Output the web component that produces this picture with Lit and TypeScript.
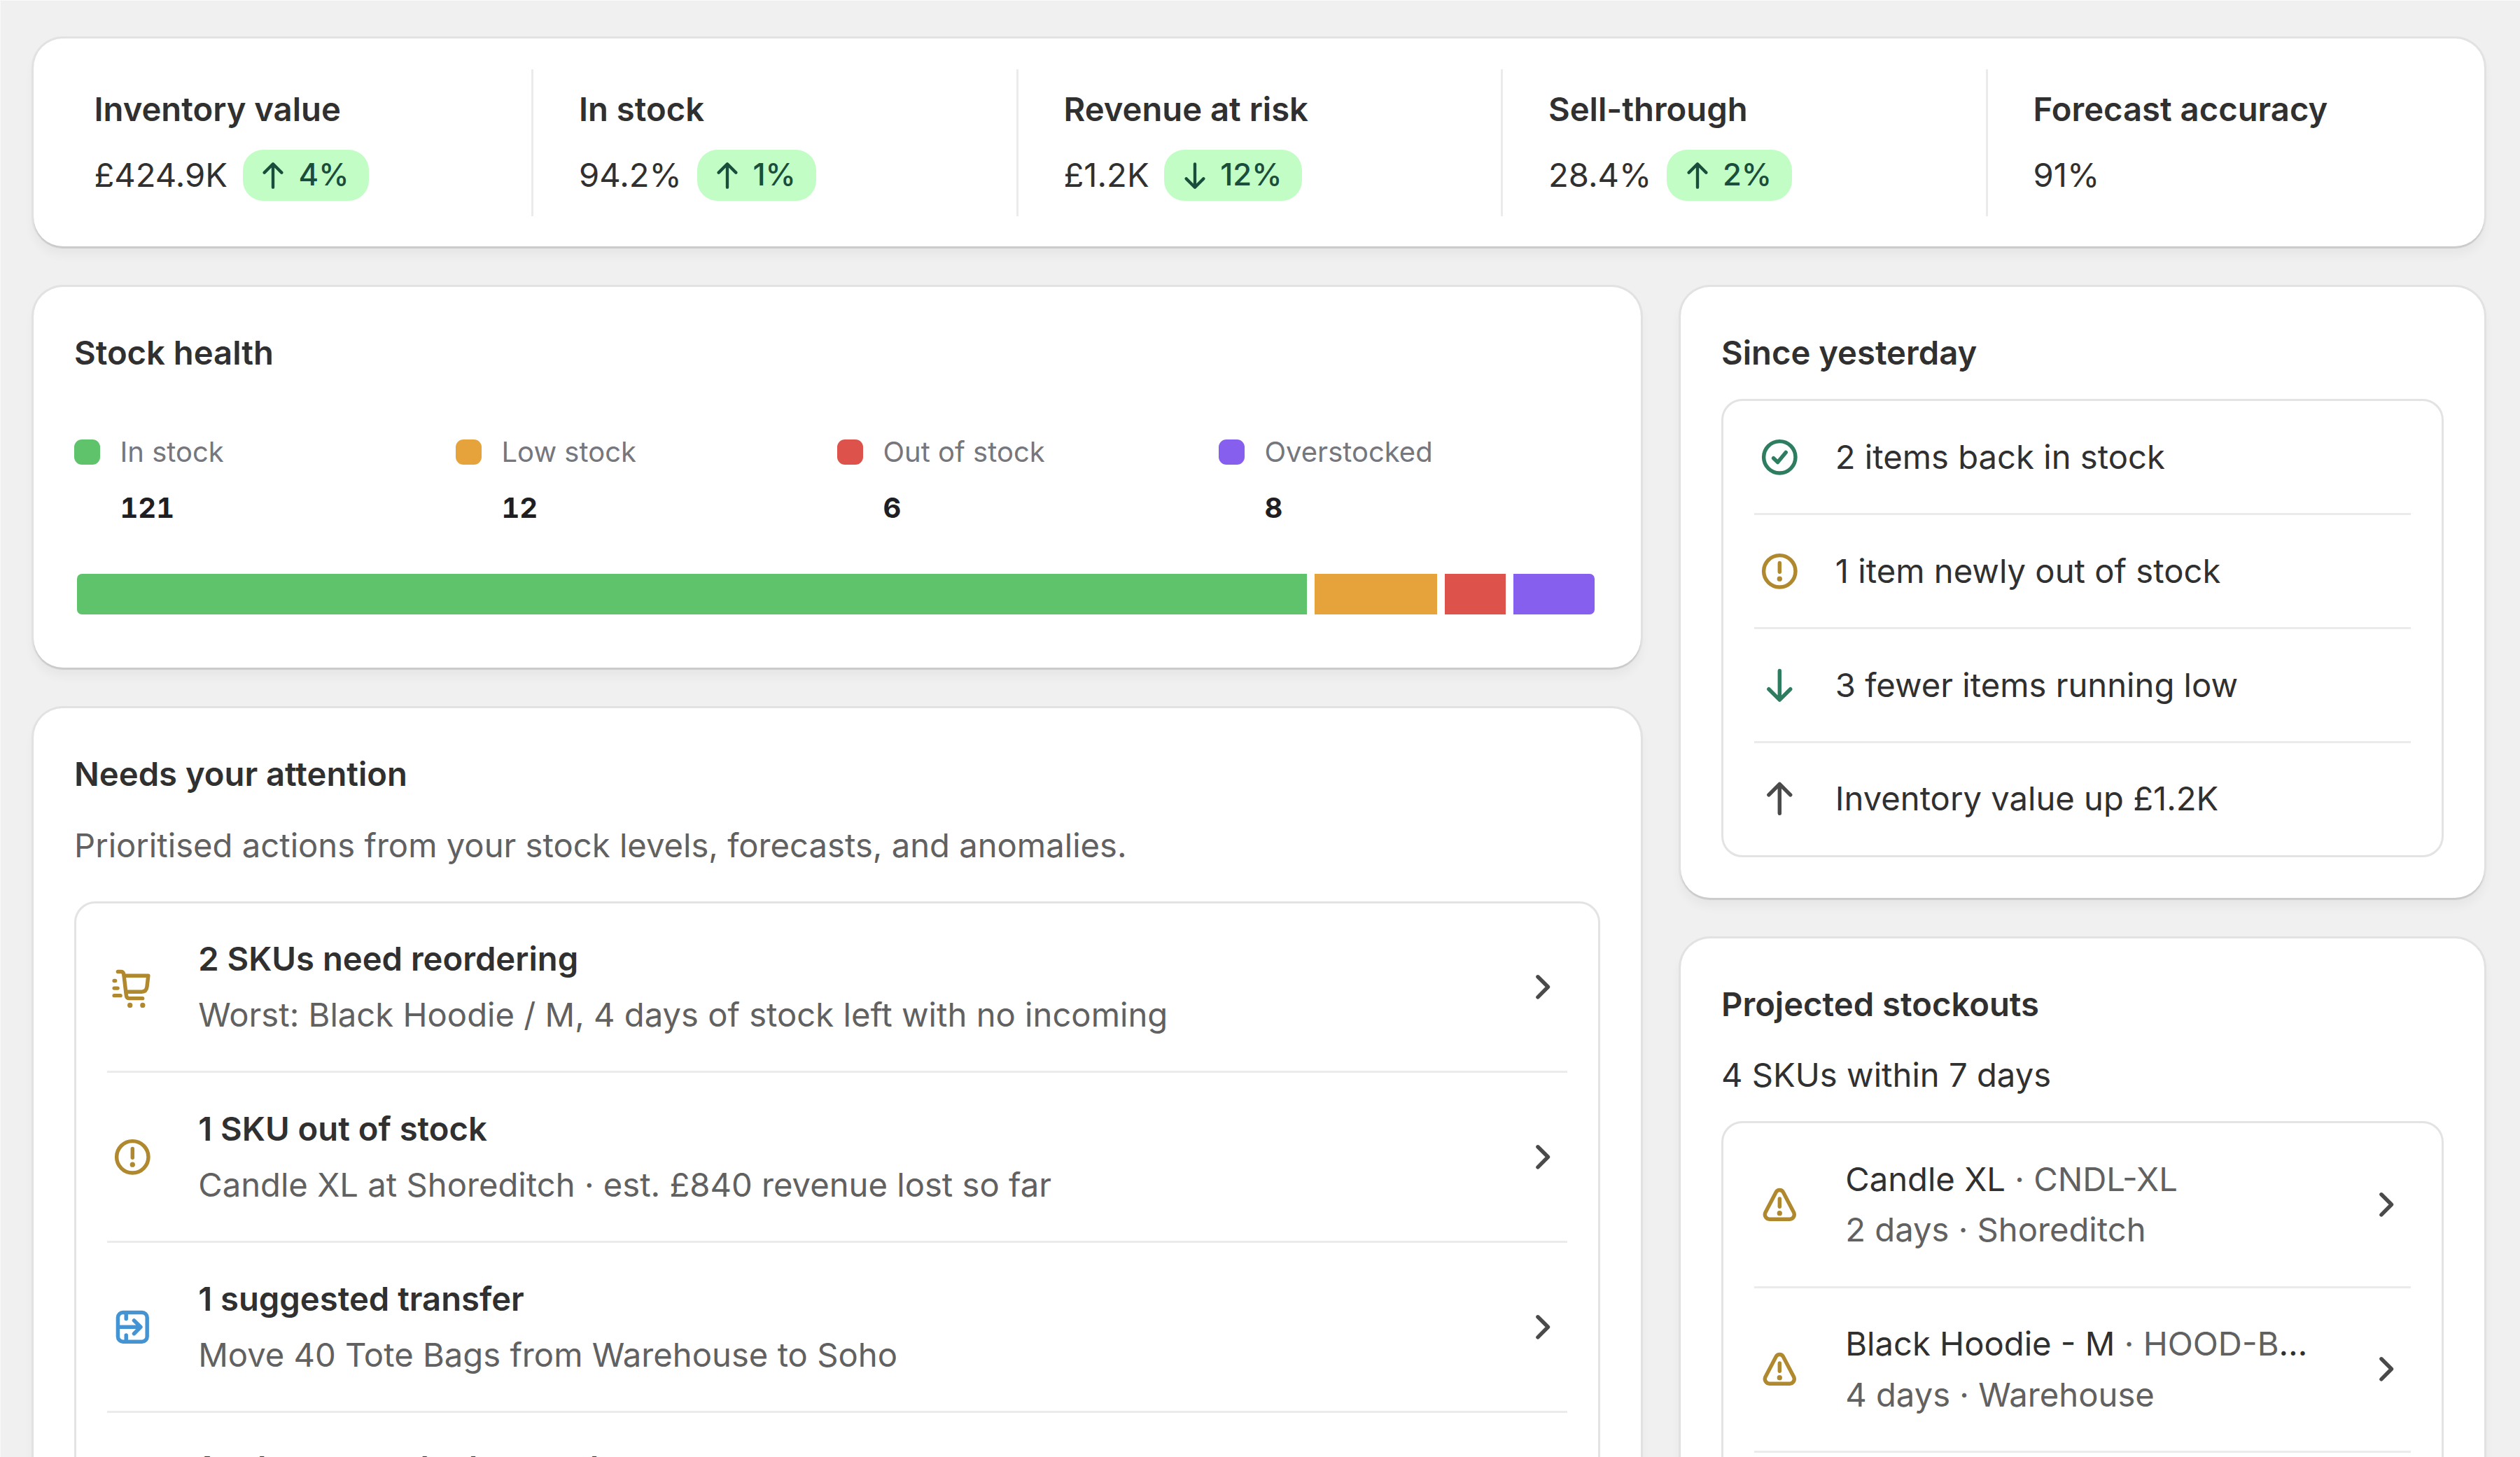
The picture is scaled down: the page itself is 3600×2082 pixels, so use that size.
import {LitElement, html, svg, css, nothing} from "lit";
import {customElement, property} from "lit/decorators.js";

// 20x20 icon grid, 1.5 strokes
const icons = {
  up: svg`<path d="M10 15.75V4.5M5.75 8.5 10 4.25 14.25 8.5" />`,
  down: svg`<path d="M10 4.25V15.5M5.75 11.5 10 15.75 14.25 11.5" />`,
  check: svg`<circle cx="10" cy="10" r="6.25" /><path d="m7.6 10.4 1.65 1.6 3.2-3.9" />`,
  alert: svg`<circle cx="10" cy="10" r="6.25" /><path d="M10 6.75v3.5" />
    <circle class="dot" cx="10" cy="13" r="1" />`,
  warning: svg`<path d="M8.6 5.1c.6-1.1 2.2-1.1 2.8 0l4.15 7.9c.65 1.25-.2 2.75-1.6 2.75h-7.9c-1.4 0-2.25-1.5-1.6-2.75z" />
    <path d="M10 7.7v3.1" /><circle class="dot" cx="10" cy="13.4" r="1" />`,
  transfer: svg`<rect x="4.25" y="4.25" width="11.5" height="11.5" rx="2" />
    <path d="M7.5 4.5v2.25M7.5 15.5v-2.25M4.5 10h8.5M10.6 7.4 13.2 10l-2.6 2.6" />`,
  cart: svg`<path d="M4.25 4h1.2c.6 0 1 .4 1.1 1l1 8.4c.1.7.5 1.1 1.2 1.1h5.2" />
    <path d="M6.75 5.6h9.45l-.5 4.3c-.15 1.3-.9 2-2.1 2H7.5" />
    <path d="M2.8 7.6h.4M2.8 10.5h1.35M2.8 13.4h2.45" />
    <circle class="dot" cx="9" cy="17.2" r="1" /><circle class="dot" cx="14" cy="17.2" r="1" />`,
  chevron: svg`<path d="m8.25 6 4 4-4 4" />`,
};

type IconName = keyof typeof icons;

interface Metric {
  label: string;
  value: string;
  trend?: "up" | "down";
  change?: string;
}

const metrics: Metric[] = [
  {label: "Inventory value", value: "£424.9K", trend: "up", change: "4%"},
  {label: "In stock", value: "94.2%", trend: "up", change: "1%"},
  {label: "Revenue at risk", value: "£1.2K", trend: "down", change: "12%"},
  {label: "Sell-through", value: "28.4%", trend: "up", change: "2%"},
  {label: "Forecast accuracy", value: "91%"},
];

const health = [
  {label: "In stock", count: 121, color: "#5ec36a"},
  {label: "Low stock", count: 12, color: "#e6a23b"},
  {label: "Out of stock", count: 6, color: "#de524c"},
  {label: "Overstocked", count: 8, color: "#865fee"},
];

const actions: {icon?: IconName; tone?: string; title: string; text?: string}[] = [
  {
    icon: "cart",
    tone: "caution",
    title: "2 SKUs need reordering",
    text: "Worst: Black Hoodie / M, 4 days of stock left with no incoming",
  },
  {
    icon: "alert",
    tone: "caution",
    title: "1 SKU out of stock",
    text: "Candle XL at Shoreditch · est. £840 revenue lost so far",
  },
  {
    icon: "transfer",
    tone: "info",
    title: "1 suggested transfer",
    text: "Move 40 Tote Bags from Warehouse to Soho",
  },
  {title: "1 sales anomaly detected"},
];

const changes: {icon: IconName; tone: string; text: string}[] = [
  {icon: "check", tone: "success", text: "2 items back in stock"},
  {icon: "alert", tone: "caution", text: "1 item newly out of stock"},
  {icon: "down", tone: "success", text: "3 fewer items running low"},
  {icon: "up", tone: "base", text: "Inventory value up £1.2K"},
];

const stockouts = [
  {name: "Candle XL", sku: "CNDL-XL", days: 2, location: "Shoreditch"},
  {name: "Black Hoodie - M", sku: "HOOD-BLK-M", days: 4, location: "Warehouse"},
];

/**
 * An icon, coloured by its tone.
 */
@customElement("ui-icon")
export class UiIcon extends LitElement {
  static styles = css`
    :host {
      display: block;
      flex: none;
      width: 72.6px;
      height: 72.6px;
      color: #4a4a4a;
    }
    :host([tone="success"]) {
      color: #2f7d60;
    }
    :host([tone="caution"]) {
      color: #b0892e;
    }
    :host([tone="info"]) {
      color: #4494d3;
    }
    :host([tone="badge"]) {
      width: 58px;
      height: 58px;
      color: #1a4d3c;
    }
    svg {
      display: block;
      width: 100%;
      height: 100%;
      fill: none;
      stroke: currentColor;
      stroke-width: 1.5;
      stroke-linecap: round;
      stroke-linejoin: round;
    }
    .dot {
      fill: currentColor;
      stroke: none;
    }
  `;

  @property() name: IconName = "chevron";
  @property({reflect: true}) tone = "base";

  render() {
    return html`<svg viewBox="0 0 20 20">${icons[this.name]}</svg>`;
  }
}

@customElement("app-root")
export class AppRoot extends LitElement {
  static styles = css`
    :host {
      display: block;
      box-sizing: border-box;
      height: 2082px;
      overflow: hidden;
      padding: 54px 51px 0 47px;
      border-top: 1px solid #f9f9f9;
      border-left: 1px solid #f9f9f9;
      background: #f0f0f0;
      color: #303030;
      font: 400 47.2px/72.6px Inter, sans-serif;
    }
    * {
      box-sizing: border-box;
    }
    h2,
    p {
      margin: 0;
      font-size: inherit;
    }
    h2,
    .title {
      font-weight: 600;
    }
    .card {
      padding: 58px;
      border-radius: 42px;
      background: #fff;
      box-shadow: 0 3px 1px #cbcbcb, 0 0 0 3px #e2e2e2,
        0 11px 14px 2px rgba(0, 0, 0, 0.04);
    }
    .metrics {
      display: grid;
      grid-template-columns: repeat(5, 1fr);
      height: 297.3px;
      padding: 43.6px 20px 43.6px 18.5px;
    }
    .metric {
      display: flex;
      flex-direction: column;
      gap: 21.8px;
      padding: 21.5px 0 0 65px;
      border-left: 3px solid #ebebeb;
    }
    .metric:first-child {
      border-color: transparent;
    }
    .value {
      display: flex;
      gap: 21.8px;
    }
    .badge {
      display: flex;
      align-items: center;
      gap: 7.3px;
      padding: 0 29px 0 14.5px;
      border-radius: 29px;
      background: #c2fdc5;
      color: #1a4d3c;
      font-size: 43.6px;
      font-weight: 550;
    }
    .columns {
      display: grid;
      grid-template-columns: 2296px 1148px;
      gap: 57px;
      margin-top: 58px;
    }
    .column {
      display: flex;
      flex-direction: column;
      gap: 58px;
      min-width: 0;
    }
    .fill {
      min-height: 1200px;
    }
    .health {
      height: 543.7px;
    }
    .legend {
      display: grid;
      grid-template-columns: repeat(4, 1fr);
      margin-top: 74px;
      font-size: 40px;
      line-height: 62px;
    }
    .key {
      display: grid;
      grid-template-columns: 36.5px auto;
      gap: 17.9px 29px;
      align-items: center;
      color: #76767d;
    }
    .swatch {
      height: 36.5px;
      border-radius: 11px;
    }
    .count {
      grid-column: 2;
      color: #1f1f23;
      font-weight: 650;
      font-variant-numeric: tabular-nums;
    }
    .bar {
      display: flex;
      gap: 11px;
      height: 58px;
      margin: 63.6px 8px 0 3.5px;
      border-radius: 7px;
      overflow: hidden;
    }
    .segment {
      flex-basis: 0;
    }
    .subdued {
      color: #616161;
    }
    .intro {
      margin-top: 29px;
    }
    .list {
      margin-top: 29.5px;
      padding: 0 43.6px;
      border: 3.4px solid #e3e3e3;
      border-radius: 30px;
    }
    .actions {
      margin-top: 43.6px;
    }
    .fill .list {
      height: 1100px;
    }
    .row {
      display: flex;
      align-items: center;
      gap: 58px;
      padding: 43.6px 0;
    }
    .row + .row {
      border-top: 3.4px solid #ebebeb;
    }
    .row.compact {
      gap: 43.6px;
    }
    .spacer {
      width: 72.6px;
    }
    .body {
      flex: 1;
      min-width: 0;
      white-space: nowrap;
    }
    .body p {
      overflow: hidden;
      text-overflow: ellipsis;
    }
    .actions .title {
      margin-bottom: 7.3px;
    }
  `;

  renderMetric(m: Metric) {
    return html`
      <div class="metric">
        <h2>${m.label}</h2>
        <div class="value">
          <span>${m.value}</span>
          ${m.change
            ? html`<span class="badge"
                ><ui-icon name=${m.trend} tone="badge"></ui-icon>${m.change}</span
              >`
            : nothing}
        </div>
      </div>
    `;
  }

  renderHealth() {
    return html`
      <section class="card health">
        <h2>Stock health</h2>
        <div class="legend">
          ${health.map(
            (h) => html`
              <div class="key">
                <span class="swatch" style="background:${h.color}"></span>
                <span>${h.label}</span>
                <span class="count">${h.count}</span>
              </div>
            `
          )}
        </div>
        <div class="bar">
          ${health.map(
            (h) => html`<div
              class="segment"
              style="flex-grow:${h.count};background:${h.color}"
            ></div>`
          )}
        </div>
      </section>
    `;
  }

  renderActions() {
    return html`
      <section class="card fill">
        <h2>Needs your attention</h2>
        <p class="intro subdued">
          Prioritised actions from your stock levels, forecasts, and anomalies.
        </p>
        <div class="list actions">
          ${actions.map(
            (a) => html`
              <div class="row">
                ${a.icon
                  ? html`<ui-icon name=${a.icon} tone=${a.tone}></ui-icon>`
                  : html`<span class="spacer"></span>`}
                <div class="body">
                  <p class="title">${a.title}</p>
                  <p class="subdued">${a.text}</p>
                </div>
                ${a.icon ? html`<ui-icon name="chevron"></ui-icon>` : nothing}
              </div>
            `
          )}
        </div>
      </section>
    `;
  }

  renderChanges() {
    return html`
      <section class="card">
        <h2>Since yesterday</h2>
        <div class="list">
          ${changes.map(
            (c) => html`
              <div class="row compact">
                <ui-icon name=${c.icon} tone=${c.tone}></ui-icon>
                <div class="body">${c.text}</div>
              </div>
            `
          )}
        </div>
      </section>
    `;
  }

  renderStockouts() {
    return html`
      <section class="card fill">
        <h2>Projected stockouts</h2>
        <p class="intro">4 SKUs within 7 days</p>
        <div class="list">
          ${stockouts.map(
            (s) => html`
              <div class="row">
                <ui-icon name="warning" tone="caution"></ui-icon>
                <div class="body">
                  <p>${s.name} <span class="subdued">· ${s.sku}</span></p>
                  <p class="subdued">${s.days} days · ${s.location}</p>
                </div>
                <ui-icon name="chevron"></ui-icon>
              </div>
            `
          )}
          <div class="row"></div>
        </div>
      </section>
    `;
  }

  render() {
    return html`
      <section class="card metrics">${metrics.map(this.renderMetric)}</section>
      <div class="columns">
        <div class="column">${this.renderHealth()} ${this.renderActions()}</div>
        <div class="column">${this.renderChanges()} ${this.renderStockouts()}</div>
      </div>
    `;
  }
}

declare global {
  interface HTMLElementTagNameMap {
    "ui-icon": UiIcon;
    "app-root": AppRoot;
  }
}
